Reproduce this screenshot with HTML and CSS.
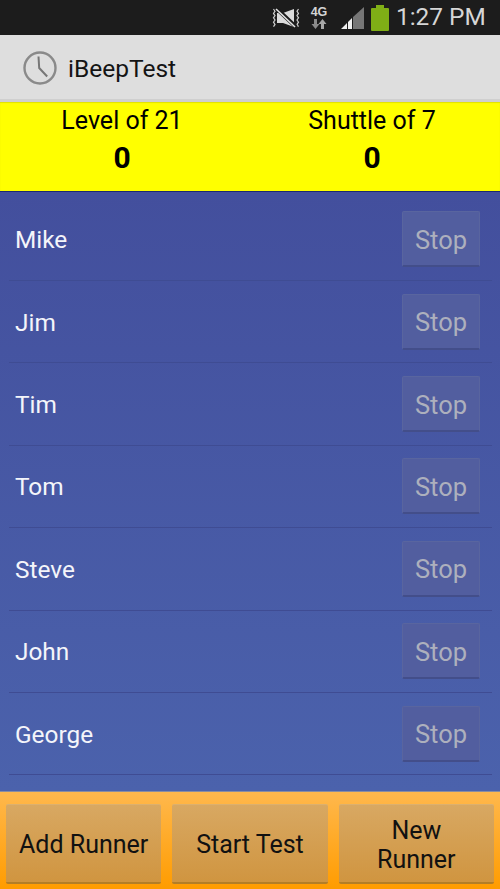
FILE: index.html
```html
<!DOCTYPE html>
<html lang="en">
<head>
<meta charset="utf-8">
<title>iBeepTest</title>
<link rel="stylesheet" href="styles.css">
</head>
<body>
<div class="app">
  <header class="status">
    <svg class="i-mute" width="28" height="20" viewBox="0 0 28 20"><path d="M1.500 1l1.500 2.200-1.500 2.200 1.500 2.200-1.500 2.200 1.500 2.200-1.500 2.200 1.500 2.200-1.500 2.200M26.500 1l-1.500 2.200 1.500 2.200-1.500 2.200 1.500 2.200-1.500 2.200 1.500 2.200-1.500 2.200 1.500 2.200" fill="none" stroke="#d0d0d0" stroke-width="1.200"/><path d="M5 5h6l11-4v18l-11-4H5z" fill="#dcdcdc"/><path d="M4 0l20 19" stroke="#1c1c1c" stroke-width="4"/><path d="M4 1l19 18" stroke="#e4e4e4" stroke-width="1.600"/></svg>
    <div class="net"><span class="net-label">4G</span><svg class="i-arrows" width="16" height="10" viewBox="0 0 16 10"><path d="M3 0h3v5h2.500L4.500 10 .5 5H3z" fill="#8a8a8a"/><path d="M10 10h3V5h2.500L11.500 0 7.500 5H10z" fill="#a6a6a6"/></svg></div>
    <svg class="i-signal" width="23" height="22" viewBox="0 0 23 22"><path d="M0 22l6-6v6zM7 22v-7l4-4v11z" fill="#f0f0f0"/><path d="M12 22V10L23 0v22z" fill="#767676"/></svg>
    <svg class="i-batt" width="18" height="26" viewBox="0 0 18 26"><path d="M5 0h8v3h4a1 1 0 0 1 1 1v21a1 1 0 0 1-1 1H1a1 1 0 0 1-1-1V4a1 1 0 0 1 1-1h4z" fill="#7fae16"/></svg>
    <span class="time">1:27 PM</span>
  </header>

  <div class="actionbar">
    <svg class="i-clock" width="36" height="36" viewBox="0 0 36 36"><circle cx="18" cy="18" r="15.500" fill="none" stroke="#8a8a8a" stroke-width="2.400"/><path d="M16.500 6.500l.7 11.500 8 8.500" fill="none" stroke="#777" stroke-width="2"/></svg>
    <span class="app-title">iBeepTest</span>
  </div>

  <section class="score">
    <div class="score-col score-level"><div class="score-label">Level of 21</div><div class="score-value">0</div></div>
    <div class="score-col score-shuttle"><div class="score-label">Shuttle of 7</div><div class="score-value">0</div></div>
  </section>

  <main class="list">
    <div class="row"><span class="name">Mike</span><button class="stop">Stop</button></div>
    <div class="row"><span class="name">Jim</span><button class="stop">Stop</button></div>
    <div class="row"><span class="name">Tim</span><button class="stop">Stop</button></div>
    <div class="row"><span class="name">Tom</span><button class="stop">Stop</button></div>
    <div class="row"><span class="name">Steve</span><button class="stop">Stop</button></div>
    <div class="row"><span class="name">John</span><button class="stop">Stop</button></div>
    <div class="row"><span class="name">George</span><button class="stop">Stop</button></div>
  </main>

  <footer class="footer">
    <button class="action">Add Runner</button>
    <button class="action">Start Test</button>
    <button class="action">New<br>Runner</button>
  </footer>
</div>
</body>
</html>
```
FILE: styles.css
```css
* { box-sizing: border-box; }
html, body { margin: 0; padding: 0; }
body { font-family: Roboto, "Liberation Sans", sans-serif; }
.app { width: 500px; height: 889px; display: flex; flex-direction: column; overflow: hidden; }

.status { height: 35px; flex: none; background: #1c1c1c; display: flex; align-items: flex-start; padding-left: 272px; }
.i-mute { margin-top: 8px; flex: none; }
.net { width: 18px; margin-left: 10px; margin-top: 6px; display: flex; flex-direction: column; align-items: center; flex: none; }
.net-label { font: bold 12.500px/13px "Liberation Sans", sans-serif; color: #d4d4d4; }
.i-arrows { margin-top: 0; }
.i-signal { margin-left: 13px; flex: none; margin-top: 7px; }
.i-batt { margin-left: 7px; flex: none; margin-top: 4.500px; }
.time { margin-left: 7px; font-size: 24.400px; line-height: 34px; color: #d6d6d6; white-space: nowrap; }

.actionbar { height: 67px; flex: none; background: #dedede; border-bottom: 3px solid #cfcfcf; display: flex; align-items: center; padding-left: 22px; }
.i-clock { flex: none; margin-top: 2px; }
.app-title { margin-left: 10px; font-size: 24.500px; line-height: 30px; margin-top: 4px; color: #141414; }

.score { height: 90px; flex: none; background: #ffff00; border-bottom: 1px solid #1d2a70; box-shadow: inset 0 1px 1px rgba(0, 0, 0, .12); display: flex; }
.score-col { display: flex; flex-direction: column; align-items: center; color: #000; }
.score-level { width: 245px; }
.score-shuttle { width: 257px; }
.score-label { font-size: 25px; line-height: 28px; margin-top: 5px; }
.score-value { font-size: 30px; line-height: 36px; font-weight: bold; margin-top: 5px; }

.list { flex: 1; background: linear-gradient(#434f9d, #4b62ac); padding: 6.600px 8px 0 9px; }
.row { height: 82.400px; border-bottom: 1px solid #3f4c93; display: flex; align-items: center; justify-content: space-between; padding: 0 12px 0 6px; }
.name { font-size: 24.400px; line-height: 30px; margin-top: 2px; color: #f4f5fa; }
.stop { width: 78px; height: 56px; border: 1px solid #59659f; border-bottom: 2px solid #434e8a; border-radius: 2px; background: #525e9f; color: #adb0bd; font: 25.500px/30px Roboto, sans-serif; padding: 2px 0 0; }

.footer { height: 98px; flex: none; background: linear-gradient(#ffb84d, #ff9c00); border-top: 1px solid #8a8da0; display: flex; gap: 11px; padding: 12px 6px 5px 6px; }
.action { flex: 1; min-width: 0; border: 0; border-top: 1px solid #dcb06e; border-bottom: 2px solid #b27e28; border-radius: 2px; background: linear-gradient(#d8a862, #d09540); color: #111; font: 25px/29px Roboto, sans-serif; padding: 2px 5px 0; white-space: nowrap; }
```
